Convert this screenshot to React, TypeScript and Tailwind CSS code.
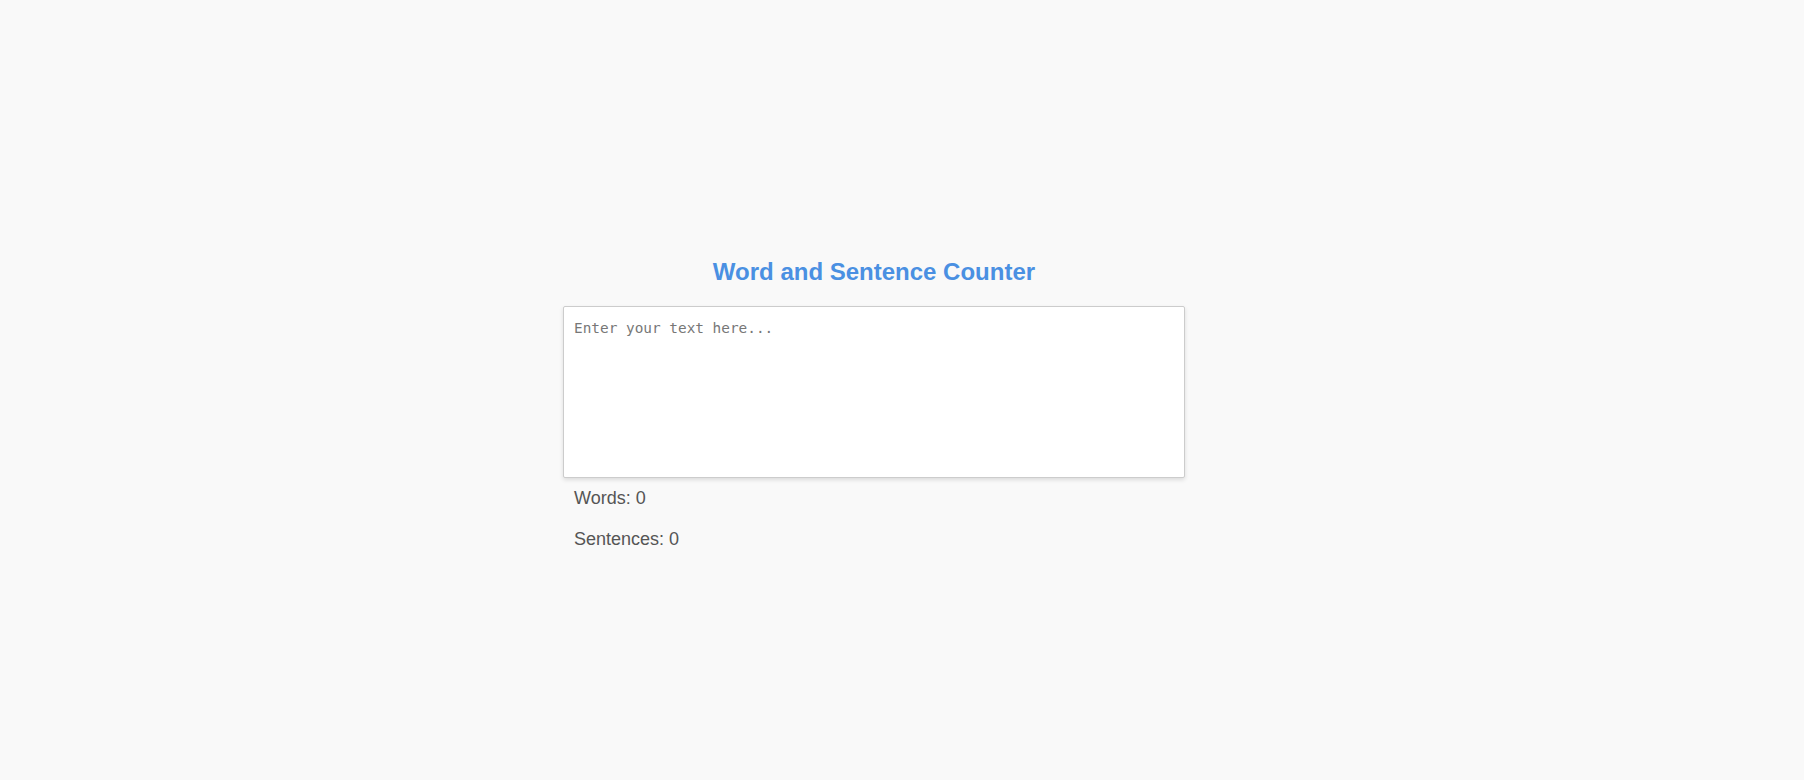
import { useState } from "react";

export default function App() {
  const [text, setText] = useState("");

  const words = text.trim() ? text.trim().split(/\s+/).length : 0;
  const sentences = text.split(/[.!?]+/).filter((s) => s.trim().length > 0).length;

  return (
    <div className="min-h-screen w-full bg-[#f9f9f9] font-['Liberation_Sans',Arial,sans-serif]">
      <div className="flex justify-center pr-[56px] pt-[258px]">
        <div className="flex w-[622px] flex-col">
          {/* Heading */}
          <h1 className="mb-[20px] text-center text-[24px] font-bold leading-[28px] text-[#4a90e2]">
            Word and Sentence Counter
          </h1>

          <textarea
            value={text}
            onChange={(e) => setText(e.target.value)}
            placeholder="Enter your text here..."
            className="h-[172px] w-full resize-none rounded-[2px] border border-[#cccccc] bg-white px-[10px] pt-[11px] pb-[10px] font-['DejaVu_Sans_Mono',monospace] text-[14.4px] text-[#333] shadow-[0_2px_4px_rgba(0,0,0,0.12)] outline-none placeholder:text-[#777]"
          />

          {/* Counts */}
          <div className="mt-[9px] flex flex-col gap-[18px] px-[11px] text-[18px] leading-[23px] text-[#555]">
            <p>Words: {words}</p>
            <p>Sentences: {sentences}</p>
          </div>
        </div>
      </div>
    </div>
  );
}
